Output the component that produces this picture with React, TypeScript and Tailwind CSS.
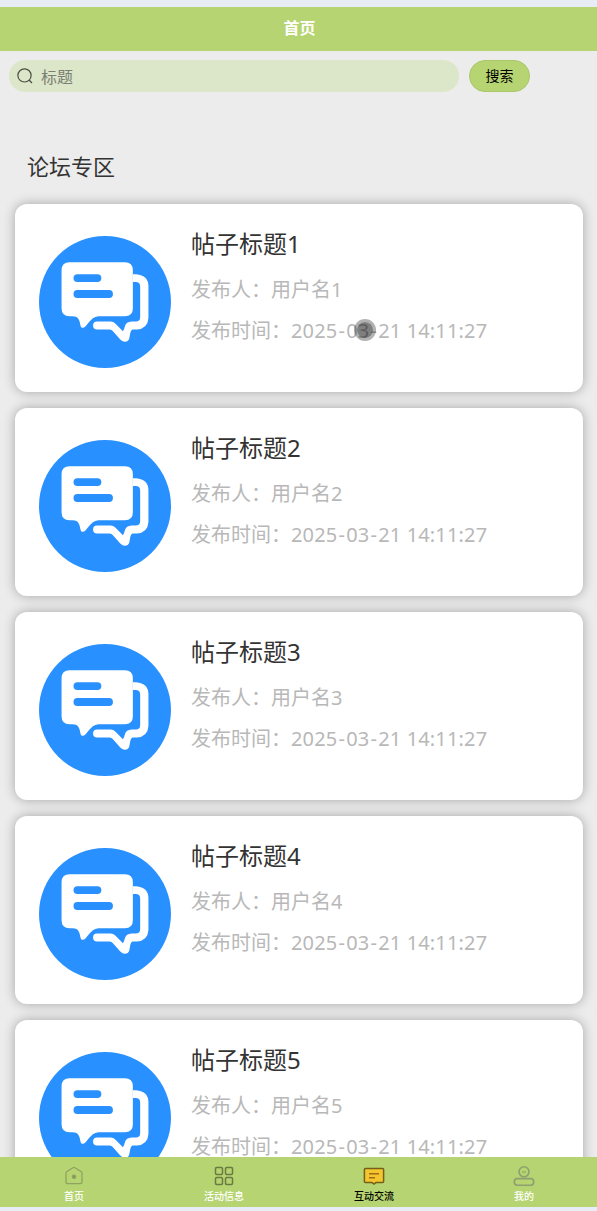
import type { ReactNode } from 'react';

const posts = [1, 2, 3, 4, 5].map((n) => ({
  id: n,
  title: '帖子标题',
  user: '用户名',
  date: ['2025', '03', '21'],
  time: '14:11:27',
}));

function ForumIcon() {
  return (
    <svg className="size-[132px] shrink-0" viewBox="27 32 398 398" fill="none">
      <circle cx="226" cy="231" r="199" fill="#2890ff" />
      <path
        d="M119 111H286Q310 111 310 135V250Q310 274 286 274H206C180 276 172 309 158 309C147 309 157 274 129 274H119Q95 274 95 250V135Q95 111 119 111Z"
        fill="#fff"
      />
      <path
        d="M143 159H203M143 207H238"
        stroke="#2890ff"
        strokeWidth="24"
        strokeLinecap="round"
      />
      <path
        d="M310 147H320Q357 150 357 184V279Q355 311 322 314H310Q304 315 302 326L299 342Q296 351 286 351Q279 351 272 344L250 319Q246 314 240 314H202A12 12 0 0 1 202 290H243Q251 290 257 296L280 319Q284 314 286 304Q290 291 306 290H318Q332 290 332 277V184Q332 171 318 171H310Z"
        fill="#fff"
      />
    </svg>
  );
}

function HomeIcon() {
  return (
    <svg className="h-[20px] w-[20px]" viewBox="0 0 20 20" fill="none" stroke="#8fa35f" strokeWidth="1.3">
      <path d="M9 1.7Q10 1 11 1.7L17 5.5Q18 6.2 18 7.2V16Q18 17.7 16.3 17.7H3.7Q2 17.7 2 16V7.2Q2 6.2 3 5.5Z" />
      <circle cx="10" cy="10.7" r="1.6" fill="#82945b" />
    </svg>
  );
}

function GridIcon() {
  return (
    <svg className="h-[20px] w-[20px]" viewBox="0 0 20 20" fill="none" stroke="#697a42" strokeWidth="1.5">
      <rect x="1.5" y="1.5" width="7" height="7" rx="1.2" />
      <rect x="11.5" y="1.5" width="7" height="7" rx="1.2" />
      <rect x="1.5" y="11.5" width="7" height="7" rx="1.2" />
      <rect x="11.5" y="11.5" width="7" height="7" rx="1.2" />
    </svg>
  );
}

function ChatIcon() {
  return (
    <svg className="h-[20px] w-[22px]" viewBox="0 0 22 20" fill="none" stroke="#75601b" strokeWidth="1.5">
      <path
        d="M2.4 2.4H19.6Q20.6 2.4 20.6 3.4V15.6Q20.6 16.6 19.6 16.6H13L11 18L9 16.6H2.4Q1.4 16.6 1.4 15.6V3.4Q1.4 2.4 2.4 2.4Z"
        fill="#f3c52f"
      />
      <path d="M6 7.7H16M6 11.7H12" stroke="#a36b13" />
    </svg>
  );
}

function UserIcon() {
  return (
    <svg className="h-[20px] w-[22px]" viewBox="0 0 22 20" fill="none" stroke="#8e9f70" strokeWidth="1.6">
      <circle cx="11" cy="5.8" r="5" />
      <path d="M9 6H13" strokeWidth="1" />
      <rect x="1.3" y="12.6" width="19.4" height="6.6" rx="3.1" />
    </svg>
  );
}

const tabs: { label: string; icon: ReactNode; active?: boolean }[] = [
  { label: '首页', icon: <HomeIcon /> },
  { label: '活动信息', icon: <GridIcon /> },
  { label: '互动交流', icon: <ChatIcon />, active: true },
  { label: '我的', icon: <UserIcon /> },
];

export default function App() {
  return (
    <div className="flex h-[1211px] w-[597px] flex-col overflow-hidden bg-[#e8ecf5] pt-[7px] pb-[4px] font-['Noto_Sans','Noto_Sans_CJK_SC',sans-serif]">
      <header className="flex h-[44px] shrink-0 items-center justify-center bg-[#b6d471] pb-[4px] pl-[2px] font-['Noto_Sans_CJK_SC',sans-serif] text-[16px] font-bold text-white">
        首页
      </header>

      <main className="min-h-0 flex-1 overflow-hidden bg-[#ececec]">
        {/* Search bar */}
        <div className="flex gap-[10px] pt-[9px] pl-[9px]">
          <div className="flex h-8 w-[450px] items-center rounded-full bg-[#dce6c8] pl-[8px]">
            <svg className="size-4" viewBox="0 0 16 16" fill="none" stroke="#4b4f43" strokeWidth="1.2">
              <circle cx="7.5" cy="7.4" r="6.6" />
              <path d="M12 12L15 15" />
            </svg>
            <span className="-mt-px ml-[8px] font-['Noto_Sans_CJK_SC',sans-serif] text-[16px] leading-[30px] text-[#7b7f75]">标题</span>
          </div>
          <button className="h-8 w-[61px] rounded-full border border-[#aac76b] bg-[#b6d471] pb-[2px] font-['Noto_Sans_CJK_SC',sans-serif] text-[14px] leading-[28px] text-black">
            搜索
          </button>
        </div>

        <h2 className="mt-[57px] ml-[27px] font-['Noto_Sans_CJK_SC',sans-serif] text-[22px] leading-[32px] text-[#333]">
          论坛专区
        </h2>

        {/* Post list */}
        <div className="mt-[23px] flex flex-col gap-4 pr-[14px] pl-[15px]">
          {posts.map((post) => (
            <div
              key={post.id}
              className="flex h-[188px] shrink-0 gap-[20px] rounded-xl bg-white pt-[32px] pl-[24px] shadow-[0_0_12px_rgba(0,0,0,0.3)]"
            >
              <ForumIcon />
              <div className="-mt-[11px] font-['Noto_Sans_CJK_SC',sans-serif] text-[20px] text-[#b8b8b8]">
                <div className="h-[36px] text-[24px] leading-[36px] text-[#333]">
                  {post.title}
                  <span className="font-['Noto_Sans']">{post.id}</span>
                </div>
                <div className="mt-[7px] h-[41px] leading-[42px]">
                  发布人：{post.user}
                  <span className="font-['Noto_Sans']">{post.id}</span>
                </div>
                <div className="h-[42px] leading-[42px] whitespace-nowrap">
                  发布时间：
                  <span className="relative font-['Noto_Sans'] tracking-[0.15px]">
                    {post.date[0]}
                    <span className="px-[1.1px]">-</span>
                    {post.date[1]}
                    <span className="px-[1.1px]">-</span>
                    {post.date[2]} {post.time}
                    {/* Touch pointer */}
                    {post.id === 1 && (
                      <span className="absolute top-[2px] left-[63px] size-[22px] rounded-full border-[3px] border-black/30 bg-black/50 bg-clip-padding" />
                    )}
                  </span>
                </div>
              </div>
            </div>
          ))}
        </div>
      </main>

      <nav className="h-[50px] shrink-0 overflow-hidden bg-[#b6d471]">
        <div className="-ml-px grid w-[600px] grid-cols-4">
          {tabs.map((tab) => (
            <div
              key={tab.label}
              className={`flex flex-col items-center pt-[9px] font-['Noto_Sans_CJK_SC',sans-serif] text-[10px] leading-[20px] font-medium ${
                tab.active ? 'text-black' : 'text-white'
              }`}
            >
              {tab.icon}
              {tab.label}
            </div>
          ))}
        </div>
      </nav>
    </div>
  );
}
